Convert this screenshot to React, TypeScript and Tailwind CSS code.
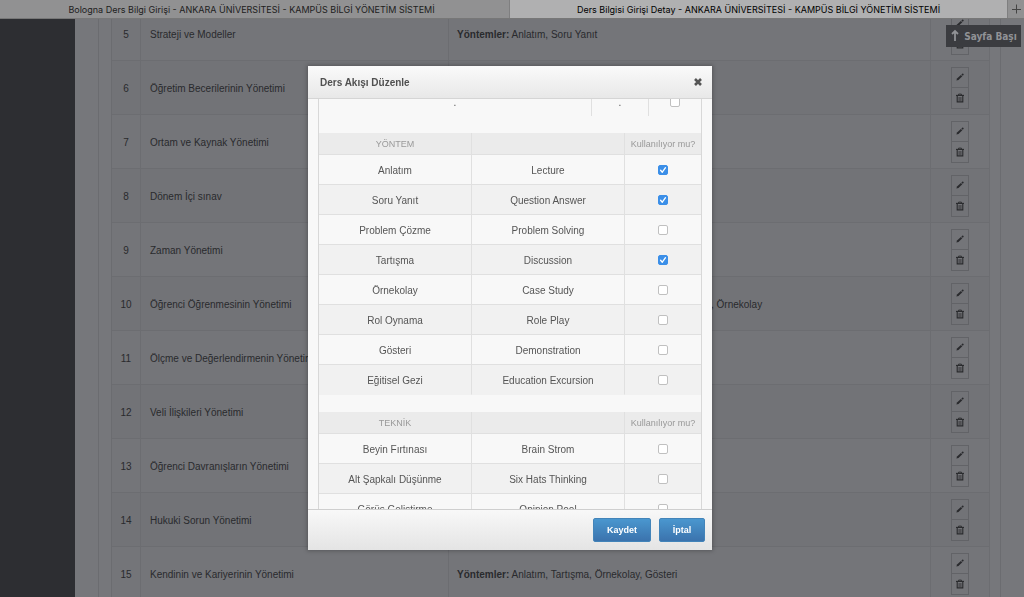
import { useState } from 'react';

type Option = { tr: string; en: string; checked?: boolean };

const weeks = [
  { no: 5, title: 'Strateji ve Modeller', methods: 'Anlatım, Soru Yanıt' },
  { no: 6, title: 'Öğretim Becerilerinin Yönetimi' },
  { no: 7, title: 'Ortam ve Kaynak Yönetimi' },
  { no: 8, title: 'Dönem İçi sınav' },
  { no: 9, title: 'Zaman Yönetimi' },
  {
    no: 10,
    title: 'Öğrenci Öğrenmesinin Yönetimi',
    methods: 'Anlatım, Tartışma, Soru Yanıt, Beyin Fırtınası, Örnekolay',
  },
  { no: 11, title: 'Ölçme ve Değerlendirmenin Yönetimi' },
  { no: 12, title: 'Veli İlişkileri Yönetimi' },
  { no: 13, title: 'Öğrenci Davranışların Yönetimi' },
  { no: 14, title: 'Hukuki Sorun Yönetimi' },
  { no: 15, title: 'Kendinin ve Kariyerinin Yönetimi', methods: 'Anlatım, Tartışma, Örnekolay, Gösteri' },
];

const methods: Option[] = [
  { tr: 'Anlatım', en: 'Lecture', checked: true },
  { tr: 'Soru Yanıt', en: 'Question Answer', checked: true },
  { tr: 'Problem Çözme', en: 'Problem Solving' },
  { tr: 'Tartışma', en: 'Discussion', checked: true },
  { tr: 'Örnekolay', en: 'Case Study' },
  { tr: 'Rol Oynama', en: 'Role Play' },
  { tr: 'Gösteri', en: 'Demonstration' },
  { tr: 'Eğitisel Gezi', en: 'Education Excursion' },
];

const techniques: Option[] = [
  { tr: 'Beyin Fırtınası', en: 'Brain Strom' },
  { tr: 'Alt Şapkalı Düşünme', en: 'Six Hats Thinking' },
  { tr: 'Görüş Geliştirme', en: 'Opinion Pool' },
];

function PencilIcon() {
  return (
    <svg viewBox="0 0 10 10" className="size-2.5" fill="currentColor">
      <path d="M1.4 8.6 2 6.5 5.9 2.9 7.3 4.3 3.5 8z" />
      <path d="M6.4 2.4 7.2 1.7q.5-.4 1 .1l.3.3q.4.5 0 .9l-.8.8z" />
    </svg>
  );
}

function TrashIcon() {
  return (
    <svg viewBox="0 0 10 10" className="size-2.5" fill="none" stroke="currentColor">
      <path d="M1 2.4h8" strokeWidth="1.1" />
      <path d="M3.6 2.2V1.1h2.8v1.1" strokeWidth="0.9" />
      <path d="M2.2 2.8v6.1h5.6V2.8" strokeWidth="1.1" />
      <path d="M4.1 4v4M5.9 4v4" strokeWidth="0.8" />
    </svg>
  );
}

function CheckBox({ label, checked = false }: { label: string; checked?: boolean }) {
  return (
    <label className="inline-grid align-middle">
      <input
        type="checkbox"
        aria-label={label}
        defaultChecked={checked}
        className="peer col-start-1 row-start-1 size-2.5 appearance-none rounded-[2px] border border-[#c0c0c0] bg-white checked:border-[#3b8fe8] checked:bg-[#3b8fe8]"
      />
      <svg
        viewBox="0 0 10 10"
        className="pointer-events-none col-start-1 row-start-1 hidden size-2.5 peer-checked:block"
        fill="none"
        stroke="white"
        strokeWidth="1.3"
        strokeLinecap="round"
        strokeLinejoin="round"
      >
        <path d="M2.6 5.3 4.3 7.2 7.5 2.7" />
      </svg>
    </label>
  );
}

function OptionTable({ title, options }: { title: string; options: Option[] }) {
  return (
    <table className="w-full table-fixed border-separate border-spacing-0 text-center">
      <colgroup>
        <col className="w-[153px]" />
        <col className="w-[153px]" />
        <col />
      </colgroup>
      <thead>
        <tr className="bg-[#ebebeb] text-[9px] text-[#999]">
          <th className="h-[22px] border-r border-b border-[#e0e0e0] px-0 pt-0.5 pb-0 font-normal">{title}</th>
          <th className="border-r border-b border-[#e0e0e0] p-0" />
          <th className="border-b border-[#e0e0e0] px-0 pt-0.5 pb-0 font-normal">Kullanılıyor mu?</th>
        </tr>
      </thead>
      <tbody className="[&>tr:last-child>td]:border-b-transparent">
        {options.map((option) => (
          <tr key={option.tr} className="bg-[#f8f8f8] even:bg-[#f1f1f1]">
            <td className="h-[30px] border-r border-b border-[#e0e0e0] px-0 pt-0.5 pb-0">{option.tr}</td>
            <td className="border-r border-b border-[#e0e0e0] px-0 pt-0.5 pb-0">{option.en}</td>
            <td className="border-b border-[#e0e0e0] p-0">
              <CheckBox label={option.tr} checked={option.checked} />
            </td>
          </tr>
        ))}
      </tbody>
    </table>
  );
}

function EditDialog({ onClose }: { onClose: () => void }) {
  return (
    <div className="fixed inset-0 z-20 flex items-start justify-center pt-[66px] pr-1">
      <div
        role="dialog"
        aria-labelledby="dialog-title"
        className="w-[404px] max-w-full bg-[#f8f8f8] text-[#555] shadow-[0_0_4px_1px_rgba(0,0,0,0.25)]"
      >
        <div className="flex h-[33px] items-center justify-between border-b border-[#d5d5d5] bg-linear-to-b from-[#fafafa] to-[#e8e8e8] pr-[9px] pl-3">
          <h2 id="dialog-title" className="text-[10px] font-bold text-[#505050]">
            Ders Akışı Düzenle
          </h2>
          <button type="button" aria-label="Kapat" onClick={onClose} className="text-[#555]">
            <svg viewBox="0 0 10 10" className="size-2.5" stroke="currentColor" strokeWidth="2.6">
              <path d="M2 2l6 6M8 2 2 8" />
            </svg>
          </button>
        </div>

        <div className="h-[410px] overflow-hidden px-2.5">
          <div className="-mt-[13px] space-y-[17px] border-x border-[#d8d8d8]">
            <table className="w-full table-fixed border-separate border-spacing-0 text-center">
              <tbody>
                <tr>
                  <td className="h-[30px] border-r border-[#e0e0e0] px-0 pt-0.5 pb-0">.</td>
                  <td className="w-[57px] border-r border-[#e0e0e0] px-0 pt-0.5 pb-0">.</td>
                  <td className="w-[52px] p-0">
                    <CheckBox label="Diğer" />
                  </td>
                </tr>
              </tbody>
            </table>
            <OptionTable title="YÖNTEM" options={methods} />
            <OptionTable title="TEKNİK" options={techniques} />
          </div>
        </div>

        <div className="flex h-[41px] items-center justify-end gap-2 border-t border-[#cfcfcf] bg-linear-to-b from-[#f8f8f8] to-[#e4e4e4] pr-[7px]">
          <button
            type="button"
            className="h-6 w-[58px] rounded-[2px] border border-[#4384b9] bg-linear-to-b from-[#4a97cf] to-[#3b73ad] pt-0.5 text-[9px] font-bold text-white"
          >
            Kaydet
          </button>
          <button
            type="button"
            onClick={onClose}
            className="h-6 w-[46px] rounded-[2px] border border-[#4384b9] bg-linear-to-b from-[#4a97cf] to-[#3b73ad] pt-0.5 text-[9px] font-bold text-white"
          >
            İptal
          </button>
        </div>
      </div>
    </div>
  );
}

export default function App() {
  const [open, setOpen] = useState(true);

  return (
    <div className="h-screen overflow-hidden bg-[#717276] font-['Liberation_Sans',Arial,sans-serif] text-[10px] text-[#292a2d]">
      {/* Browser tabs */}
      <nav className="fixed inset-x-0 top-0 z-10 grid h-[19px] grid-cols-[510fr_497fr_17px] border-b border-[#777] bg-[#919192] text-center font-['Inter',sans-serif] text-[9px] leading-5">
        <a href="#girisi" className="truncate border-r border-[#7f7f80] pr-1.5 text-[#202020]">
          Bologna Ders Bilgi Girişi - ANKARA ÜNİVERSİTESİ - KAMPÜS BİLGİ YÖNETİM SİSTEMİ
        </a>
        <a href="#detay" className="truncate bg-[#b0b0b1] text-black">
          Ders Bilgisi Girişi Detay - ANKARA ÜNİVERSİTESİ - KAMPÜS BİLGİ YÖNETİM SİSTEMİ
        </a>
        <button type="button" aria-label="Yeni sekme" className="grid place-items-center border-l border-[#7f7f80]">
          <svg viewBox="0 0 10 10" className="size-2.5" stroke="#444" strokeWidth="1">
            <path d="M5.5 0.5v9M1 5.5h9" />
          </svg>
        </button>
      </nav>

      <div className="flex h-full">
        <aside className="w-[75px] shrink-0 bg-[#2d2e32]" />
        <main className="min-w-0 grow bg-[#76777b] px-[23px]">
          <div className="h-full border-x border-[#6b6c70] pt-[7px] pr-2.5 pl-3">
            <table className="w-full table-fixed border-separate border-spacing-0 border-l border-[#6b6c70] bg-[#747579]">
              <colgroup>
                <col className="w-[29px]" />
                <col className="w-[308px]" />
                <col />
                <col className="w-[59px]" />
              </colgroup>
              <tbody>
                {weeks.map((week) => (
                  <tr key={week.no} className="even:bg-[#727377]">
                    <td className="h-[54px] border-r border-b border-[#6c6d71] px-0 pt-0.5 pb-0 text-center">
                      {week.no}
                    </td>
                    <td className="border-r border-b border-[#6c6d71] px-[9px] pt-0.5 pb-0">{week.title}</td>
                    <td className="border-r border-b border-[#6c6d71] px-2 pt-0.5 pb-0">
                      {week.methods && (
                        <>
                          <b>Yöntemler:</b> {week.methods}
                        </>
                      )}
                    </td>
                    <td className="border-r border-b border-[#6c6d71] p-0">
                      <div className="flex flex-col items-center">
                        <button
                          type="button"
                          aria-label="Düzenle"
                          className="grid h-[21px] w-[18px] place-items-center border border-[#626367]"
                        >
                          <PencilIcon />
                        </button>
                        <button
                          type="button"
                          aria-label="Sil"
                          className="grid h-[21px] w-[18px] place-items-center border border-t-0 border-[#626367]"
                        >
                          <TrashIcon />
                        </button>
                      </div>
                    </td>
                  </tr>
                ))}
              </tbody>
            </table>
          </div>
        </main>
      </div>

      <a
        href="#top"
        className="fixed top-[25px] right-[3px] z-10 flex h-[22px] w-[75px] items-center justify-center gap-1 bg-[#3b3c40] font-['DejaVu_Sans_Condensed','DejaVu_Sans',sans-serif] text-[10px] font-bold whitespace-nowrap text-[#919296]"
      >
        <svg viewBox="0 0 10 14" className="h-3.5 w-2.5 shrink-0" fill="none" stroke="currentColor" strokeWidth="1.8">
          <path d="M5 12V2M2 5 5 2 8 5" />
        </svg>
        Sayfa Başı
      </a>

      {open && <EditDialog onClose={() => setOpen(false)} />}
    </div>
  );
}
